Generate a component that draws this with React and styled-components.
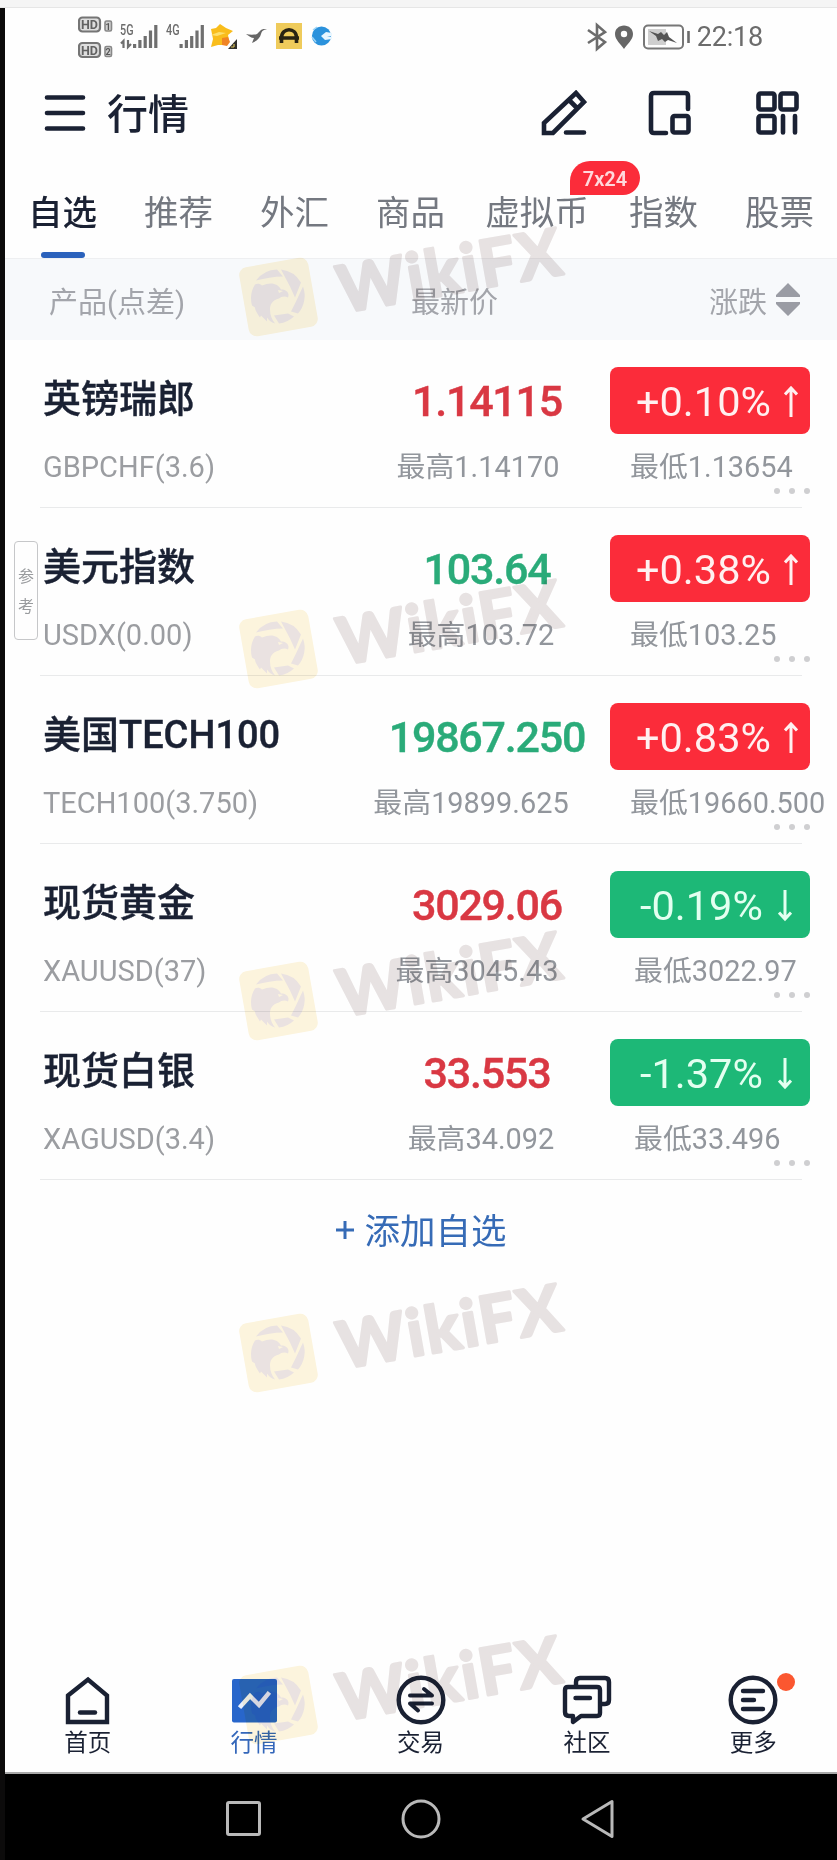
import React from "react"
import styled, { createGlobalStyle } from "styled-components"

////////// Data /////////////

const tabs = ["自选", "推荐", "外汇", "商品", "虚拟币", "指数", "股票"]

const quotes = [
  { name: "英镑瑞郎", code: "GBPCHF(3.6)", price: "1.14115", tone: "red", change: "+0.10%", up: true, high: "1.14170", low: "1.13654", inset: 20 },
  { name: "美元指数", code: "USDX(0.00)", price: "103.64", tone: "green", change: "+0.38%", up: true, high: "103.72", low: "103.25", inset: 14, tag: true },
  { name: "美国TECH100", code: "TECH100(3.750)", price: "19867.250", tone: "green", change: "+0.83%", up: true, high: "19899.625", low: "19660.500", inset: 34 },
  { name: "现货黄金", code: "XAUUSD(37)", price: "3029.06", tone: "red", change: "-0.19%", up: false, high: "3045.43", low: "3022.97", inset: 22 },
  { name: "现货白银", code: "XAGUSD(3.4)", price: "33.553", tone: "red", change: "-1.37%", up: false, high: "34.092", low: "33.496", inset: 14 },
]

const marks = [0, 1, 2, 3, 4]

////////// Style /////////////

const GlobalStyle = createGlobalStyle`
  * {
    box-sizing: border-box;
  }
  body {
    margin: 0;
    background: #fefefe;
    font-family: Roboto, "Noto Sans CJK SC", sans-serif;
    color: #1a2133;
  }
  svg {
    display: block;
    flex: none;
  }
`

const Page = styled.div`
  position: relative;
  width: 837px;
  height: 1860px;
  overflow: hidden;
  display: flex;
  flex-direction: column;
`

const TopStrip = styled.div`
  height: 8px;
  flex: none;
  background: #f5f5f5;
  border-bottom: 1px solid #e6e6e6;
`

const Phone = styled.div`
  flex: 1;
  display: flex;
  flex-direction: column;
  border-left: 5px solid #0c0b0b;
  background: #fefefe;
`

const StatusBar = styled.div`
  height: 58px;
  flex: none;
  display: flex;
  align-items: flex-start;
  justify-content: space-between;
  padding: 8px 74px 0 73px;
`

const StatusTime = styled.div`
  display: flex;
  align-items: center;
  height: 42px;
  font-size: 27px;
  color: #6c6c6c;
  letter-spacing: -0.2px;
`

const StatusIcons = styled.svg`
  margin-right: 7px;
`

const Header = styled.header`
  height: 96px;
  flex: none;
  display: flex;
  align-items: center;
  padding: 0 36px 0 39px;
`

const Title = styled.h1`
  flex: 1;
  margin: 0 0 0 21px;
  padding-top: 2px;
  font-size: 41px;
  font-weight: 500;
  line-height: 60px;
`

const HeaderIcons = styled.div`
  display: flex;
  align-items: center;
  gap: 61px;
`

const Tabs = styled.nav`
  height: 97px;
  flex: none;
  display: flex;
  border-bottom: 1px solid #eeeff1;
`

const Tab = styled.div`
  position: relative;
  width: ${(props) => (props.$wide ? "137px" : "116px")};
  flex: none;
  display: flex;
  flex-direction: column;
  align-items: center;
  justify-content: space-between;
  padding: 25px 1px 0 0;
  font-size: 34.5px;
  line-height: 52px;
  white-space: nowrap;
  font-weight: ${(props) => (props.$active ? 500 : 400)};
  color: ${(props) => (props.$active ? "#1a2133" : "#747880")};
`

const Underline = styled.div`
  width: 44px;
  height: 6px;
  border-radius: 3px;
  background: #2b62bc;
`

const HoursBadge = styled.span`
  position: absolute;
  top: -1px;
  left: 101px;
  z-index: 1;
  width: 70px;
  height: 34px;
  border-radius: 20px 17px 17px 0;
  background: #fb2c3a;
  color: #ffd9dc;
  font-size: 20px;
  font-weight: 600;
  line-height: 36px;
  text-align: center;
`

const ColumnHead = styled.div`
  height: 81px;
  flex: none;
  display: grid;
  grid-template-columns: 362px 298px 1fr;
  align-items: center;
  padding-left: 44px;
  background: #f7f9fb;
  color: #a3a5ab;
  font-size: 29px;
`

const SortLabel = styled.div`
  display: flex;
  align-items: center;
  gap: 8px;
`

const Row = styled.div`
  position: relative;
  height: 168px;
  flex: none;
  display: flex;
  flex-direction: column;
  justify-content: space-between;
`

const RowGrid = styled.div`
  display: grid;
  grid-template-columns: 323px 244px 200px;
  grid-template-rows: 67px 47px;
  align-items: center;
  padding: 27px 0 0 38px;
`

const Name = styled.div`
  font-size: 38px;
  font-weight: 500;
  line-height: 60px;
  padding-bottom: 4px;
  -webkit-text-stroke: 0.4px currentColor;
`

const Price = styled.div`
  font-size: 43px;
  font-weight: 500;
  letter-spacing: -1.2px;
  text-align: center;
  padding: 1px 2px 0 0;
  -webkit-text-stroke: 0.4px currentColor;
  color: ${(props) => (props.$tone === "red" ? "#d93843" : "#2aab79")};
`

const Change = styled.div`
  height: 67px;
  display: flex;
  align-items: center;
  justify-content: space-between;
  padding: 2px ${(props) => (props.$up ? "12px 0 26px" : "18px 0 30px")};
  border-radius: 8px;
  background: ${(props) => (props.$up ? "#fb2c3a" : "#1db877")};
  color: ${(props) => (props.$up ? "#fff0f0" : "#e3fff0")};
  font-size: 41.5px;
`

const Code = styled.div`
  font-size: 29px;
  color: #9b9da1;
  padding-top: 18px;
`

const High = styled.div`
  padding: 13px ${(props) => props.$inset}px 0 0;
  font-size: 28.9px;
  text-align: center;
  white-space: nowrap;
  color: #92969c;
`

const Low = styled.div`
  padding: 13px 0 0 ${(props) => (props.$up ? 20 : 24)}px;
  font-size: 28.9px;
  white-space: nowrap;
  color: #92969c;
`

const RowFoot = styled.div`
  display: flex;
  flex-direction: column;
  gap: 13px;
`

const More = styled.div`
  display: flex;
  justify-content: flex-end;
  gap: 9px;
  padding-right: 27px;
`

const Dot = styled.i`
  width: 6px;
  height: 6px;
  border-radius: 50%;
  background: #cfcfd1;
`

const Divider = styled.div`
  height: 1px;
  margin: 0 35px;
  background: #e9eaeb;
`

const Tag = styled.div`
  position: absolute;
  left: 9px;
  top: 33px;
  width: 24px;
  height: 99px;
  border: 1.5px solid #c6c7c9;
  border-radius: 4px;
  display: flex;
  flex-direction: column;
  align-items: center;
  justify-content: center;
  padding-top: 2px;
  font-size: 16px;
  line-height: 30px;
  color: #999b9e;
`

const AddButton = styled.div`
  display: flex;
  align-items: center;
  justify-content: center;
  gap: 9px;
  height: 104px;
  flex: none;
  padding: 0 0 7px 0;
  color: #366bb6;
  font-size: 35.5px;
`

const Spacer = styled.div`
  flex: 1;
`

const BottomNav = styled.nav`
  display: flex;
  height: 111px;
  flex: none;
  border-bottom: 2px solid #a9a9a9;
`

const NavItem = styled.div`
  position: relative;
  flex: 1;
  display: flex;
  flex-direction: column;
  align-items: center;
  padding: 12px 1px 0 0;
  gap: 1px;
  font-size: 23.5px;
  line-height: 34px;
  color: ${(props) => (props.$active ? "#3467ba" : "#1a2133")};
`

const Notice = styled.span`
  position: absolute;
  top: 10px;
  left: 106px;
  width: 18px;
  height: 18px;
  border-radius: 50%;
  background: #fb5730;
`

const SystemBar = styled.div`
  display: flex;
  align-items: center;
  justify-content: center;
  gap: 138px;
  height: 86px;
  flex: none;
  padding: 3px 0 0 0;
  background: #000;
`

const Watermarks = styled.div`
  position: absolute;
  top: 177px;
  left: 222px;
  display: flex;
  flex-direction: column;
  gap: 132px;
  pointer-events: none;
  mix-blend-mode: multiply;
`

////////// Icons /////////////

const ink = { fill: "none", stroke: "#1a2133", strokeWidth: 4.6, strokeLinecap: "round", strokeLinejoin: "round" }

const Bars = ({ x }) => (
  <g fill="#6f6f6f">
    <rect x={x} y="28" width="3.2" height="4" />
    <rect x={x + 5.3} y="24" width="3.2" height="8" />
    <rect x={x + 10.6} y="20" width="3.2" height="12" />
    <rect x={x + 15.9} y="14.5" width="3.2" height="17.5" />
    <rect x={x + 21.2} y="9" width="3.2" height="23" />
  </g>
)

const LeftStatus = () => (
  <svg width="260" height="44" viewBox="0 0 260 44" fontFamily="Roboto, sans-serif" fontWeight="700">
    {[1, 26.5].map((y, i) => (
      <g key={y}>
        <rect x="1" y={y + 0.5} width="21" height="14" rx="3.5" fill="#dedede" stroke="#757575" strokeWidth="2.2" />
        <text x="11.5" y={y + 12} fontSize="12.5" textAnchor="middle" fill="#626262">HD</text>
        <rect x="27" y={y + 4} width="6.5" height="10" rx="1.5" fill="#d0d0d0" stroke="#888888" strokeWidth="1.6" />
        <text x="30.2" y={y + 12.5} fontSize="9" textAnchor="middle" fill="#555555">{i + 1}</text>
      </g>
    ))}
    <text x="42" y="19" fontSize="14" fontWeight="500" textLength="13.5" lengthAdjust="spacingAndGlyphs" fill="#6b6b6b">5G</text>
    <path d="M45.5 32V25l-2.5 2.5M50 24v7l3-3" fill="none" stroke="#6f6f6f" strokeWidth="2.2" />
    <Bars x={55} />
    <text x="88" y="19" fontSize="14" fontWeight="500" textLength="13.5" lengthAdjust="spacingAndGlyphs" fill="#6b6b6b">4G</text>
    <Bars x={101.5} />
    <path d="M133 13l5-1 4-4 6 4 7 3-5 4 1 5-5 5h-6l-7 2 2-8z" fill="#f9bd1c" />
    <path d="M144 22l6-1 2 5-3 4-5-1z" fill="#f08424" />
    <path d="M133 19l8-3 7 1-9 3z" fill="#fde06f" />
    <path d="M150 33l9-10v10z" fill="#31302c" />
    <path d="M153 31h3M156 28v3" stroke="#d8c05a" strokeWidth="1.2" />
    <path d="M168 18c4 1 8 1 11 0l3-3c2-2 3-2 7-2-4 1-5 2-6 5-1 4-4 7-9 9l2-5c-3 0-5-2-8-4z" fill="#666666" />
    <rect x="198" y="7" width="26" height="26" fill="#efcb5b" />
    <path d="M203.5 27v-5c0-11 15-11 15 0v5M201 22h20" fill="none" stroke="#292313" strokeWidth="3.6" />
    <circle cx="243.5" cy="20" r="9.6" fill="#2b92dc" />
    <path d="M254 17l-6-1-5 4 4 4 7-1v-2l-5-1h5z" fill="#e8f6ff" />
    <path d="M235 14l4-3M234 21l4 5" stroke="#9bd4f7" strokeWidth="1.5" />
  </svg>
)

const Logo = () => (
  <svg width="400" height="220" viewBox="0 -40 400 220">
    <rect x="-35" y="-35" width="70" height="70" rx="8" transform="translate(56.5 80) rotate(-10)" fill="#fdf5de" />
    {/* eagle head inside an aperture ring */}
    <g transform="translate(56 79.5)" fill="#ebe3e2">
      <path d="M-22-16A27 27 0 0 1-1-27L5-20C-4-20-13-18-22-16z" />
      <path d="M3-27A27 27 0 0 1 23-14L17 1 12-10z" />
      <path d="M25-10A27 27 0 0 1 20 17L13 15 18 5z" />
      <path d="M16 20A27 27 0 0 1 1 27L-4 19 10 17z" />
      <path d="M-16-11C-7-15 0-13 3-7 8-7 12-4 10 1 7-1 3 0 1 2-6 4-8 8-8 13-8 19-6 23-3 27-7 26-9 24-11 21L-11 25-17 19-18 21C-22 15-23 13-23 11L-26 9C-28 2-27-6-23-12-21-13-18-13-16-11z" />
    </g>
    <path d="M56 73l5 1-4 2z" fill="#fdf5de" />
    <text
      transform="translate(120 96) rotate(-10)"
      fontFamily="Lato, sans-serif"
      fontWeight="700"
      fontSize="65"
      letterSpacing="2"
      fill="#e8e3e3"
      stroke="#e8e3e3"
      strokeWidth="3"
      strokeLinejoin="round"
    >
      WikiFX
    </text>
  </svg>
)

const Arrow = ({ up }) => (
  <svg width="14" height="32" viewBox="0 0 14 32" fill="none" stroke="currentColor" strokeWidth="3">
    <path d={up ? "M7 31V2M1 8.5L7 2l6 6.5" : "M7 0v29M1 22.5L7 29l6-6.5"} />
  </svg>
)

const navItems = [
  {
    label: "首页",
    icon: <path d="M5 20.5L25 4.5l19 16V47H5z" strokeLinejoin="miter" />,
    extra: <path d="M17 37.5h15" />,
  },
  { label: "行情", active: true },
  {
    label: "交易",
    icon: <circle cx="25" cy="25" r="22.3" />,
    extra: <path d="M14 20.5h22l-8-6.5M36 28.5H14l8 7" strokeWidth="4" />,
  },
  {
    label: "社区",
    icon: <path d="M6 12h29q3 0 3 3v23q0 3-3 3H19l-8 6v-6H7q-4 0-4-4V15q0-3 3-3z" />,
    extra: <path d="M13.5 23H28M14 11V7q0-4 4-4h25q4 0 4 4v18q0 4-4 4h-4" />,
  },
  {
    label: "更多",
    icon: <circle cx="25" cy="25" r="22.3" />,
    extra: <path d="M15 16h20M15 25h11M15 34h20" />,
    notice: true,
  },
]

const NavIcon = ({ item }) => (
  <svg width="50" height="50" viewBox="0 0 50 50" {...ink} strokeWidth="4.4">
    {item.active ? (
      <>
        <rect x="3" y="4" width="45" height="43.5" rx="2" fill="#2866cb" stroke="none" />
        <path d="M12 31l9-10 9 9 9-11" stroke="#e9f1fd" strokeLinecap="square" strokeLinejoin="miter" />
      </>
    ) : (
      <>
        {item.icon}
        {item.extra}
      </>
    )}
  </svg>
)

////////// Components /////////////

const Status = () => (
  <StatusBar>
    <LeftStatus />
    <StatusTime>
      <StatusIcons width="104" height="32" viewBox="0 0 104 32" fill="none" stroke="#6c6c6c" strokeWidth="2.6">
        <path d="M2 9l17 12-8 7V4l8 7L2 22" />
        <path d="M38 4.5c-5 0-9 3.5-9 8.5 0 6 6 10 9 15 3-5 9-9 9-15 0-5-4-8.5-9-8.5z" fill="#666666" stroke="none" />
        <circle cx="38" cy="13" r="3.2" fill="#fefefe" stroke="none" />
        <rect x="58" y="4.5" width="39" height="23" rx="4" stroke="#777777" strokeWidth="2" />
        <rect x="62" y="8" width="18" height="16" fill="#cfcfcf" stroke="none" />
        <path d="M63 10l9 3 3-2 3 3 3-3 2 5 8 6-9-3-3 2-3-3-4 2-2-5z" fill="#555555" stroke="none" />
        <path d="M102.5 10v12" />
      </StatusIcons>
      22:18
    </StatusTime>
  </StatusBar>
)

const Quote = ({ quote }) => (
  <Row>
    {quote.tag && (
      <Tag>
        <span>参</span>
        <span>考</span>
      </Tag>
    )}
    <RowGrid>
      <Name>{quote.name}</Name>
      <Price $tone={quote.tone}>{quote.price}</Price>
      <Change $up={quote.up}>
        <span>{quote.change}</span>
        <Arrow up={quote.up} />
      </Change>
      <Code>{quote.code}</Code>
      <High $inset={quote.inset}>最高{quote.high}</High>
      <Low $up={quote.up}>最低{quote.low}</Low>
    </RowGrid>
    <RowFoot>
      <More>
        <Dot />
        <Dot />
        <Dot />
      </More>
      <Divider />
    </RowFoot>
  </Row>
)

const App = () => {
  return (
    <>
      <GlobalStyle />
      <Page>
        <TopStrip />
        <Phone>
          <Status />
          <Header>
            <svg width="42" height="44" viewBox="0 0 42 44" {...ink}>
              <path d="M3 5.5h36M3 21h36M3 36.5h36" />
            </svg>
            <Title>行情</Title>
            <HeaderIcons>
              <svg width="46" height="48" viewBox="0 0 46 48" {...ink} strokeLinejoin="miter">
                <path d="M3 43V33L35 3l8 9-31 31zM28 10l8 8M25 42.5h18" />
              </svg>
              <svg width="46" height="48" viewBox="0 0 46 48" {...ink}>
                <path d="M18 43H6q-3 0-3-3V6q0-3 3-3h31q3 0 3 3v13" />
                <rect x="24.5" y="26" width="16" height="16.5" rx="2" />
              </svg>
              <svg width="46" height="48" viewBox="0 0 46 48" {...ink}>
                <rect x="3.5" y="3.5" width="16" height="16" rx="2" />
                <rect x="25.5" y="3.5" width="16" height="16" rx="2" />
                <rect x="3.5" y="26" width="16" height="16.5" rx="2" />
                <path d="M28 26v16.5M40 26v16.5" />
              </svg>
            </HeaderIcons>
          </Header>
          <Tabs>
            {tabs.map((tab, index) => (
              <Tab key={tab} $active={index === 0} $wide={tab.length === 3}>
                {tab}
                {index === 0 && <Underline />}
                {tab.length === 3 && <HoursBadge>7x24</HoursBadge>}
              </Tab>
            ))}
          </Tabs>
          <ColumnHead>
            <span>产品(点差)</span>
            <span>最新价</span>
            <SortLabel>
              涨跌
              <svg width="26" height="34" viewBox="0 0 26 34" fill="#9a9ca4">
                <path d="M13 0l12 12v2H1v-2zM13 33L1 21v-2h24v2z" />
              </svg>
            </SortLabel>
          </ColumnHead>
          {quotes.map((quote) => (
            <Quote key={quote.code} quote={quote} />
          ))}
          <AddButton>
            <svg width="20" height="20" viewBox="0 0 20 20" stroke="currentColor" strokeWidth="3">
              <path d="M10 2v18M1 11h18" />
            </svg>
            添加自选
          </AddButton>
          <Spacer />
          <BottomNav>
            {navItems.map((item) => (
              <NavItem key={item.label} $active={item.active}>
                <NavIcon item={item} />
                {item.label}
                {item.notice && <Notice />}
              </NavItem>
            ))}
          </BottomNav>
          <SystemBar>
            <svg width="38" height="40" viewBox="0 0 38 40" fill="none" stroke="#b9b9b9" strokeWidth="3">
              <rect x="2.5" y="3.5" width="32" height="32" rx="1.5" />
            </svg>
            <svg width="40" height="40" viewBox="0 0 40 40" fill="none" stroke="#b9b9b9" strokeWidth="3">
              <circle cx="20" cy="20" r="18" />
            </svg>
            <svg width="38" height="40" viewBox="0 0 38 40" fill="none" stroke="#b9b9b9" strokeWidth="3" strokeLinejoin="round">
              <path d="M33 2.5v35L4 20z" />
            </svg>
          </SystemBar>
        </Phone>
        <Watermarks>
          {marks.map((mark) => (
            <Logo key={mark} />
          ))}
        </Watermarks>
      </Page>
    </>
  )
}

export default App
